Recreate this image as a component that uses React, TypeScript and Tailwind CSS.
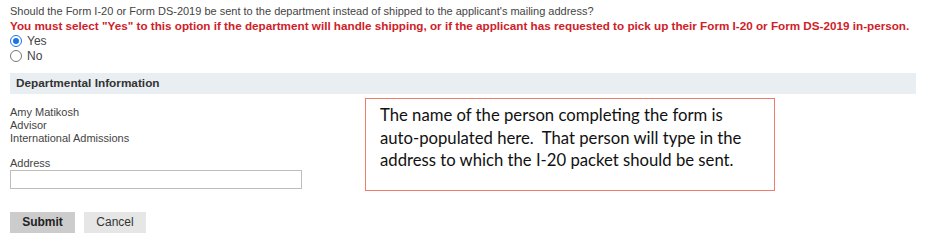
import React from "react";

export default function App() {
  return (
    <div className="relative w-[926px] h-[236px] bg-white overflow-hidden" style={{ fontFamily: '"Liberation Sans", Arial, sans-serif' }}>
      <div className="pl-[10px] pt-[5px]">
        <div className="text-[11px] leading-[13px] text-[#444] whitespace-nowrap">
          Should the Form I-20 or Form DS-2019 be sent to the department instead of shipped to the applicant's mailing address?
        </div>
        <div className="text-[11.7px] leading-[14px] font-bold text-[#cf2128] mt-[1px] whitespace-nowrap">
          You must select "Yes" to this option if the department will handle shipping, or if the applicant has requested to pick up their Form I-20 or Form DS-2019 in-person.
        </div>
        <div className="flex flex-col">
          <label className="flex items-center gap-[5px] h-[15px] text-[12px] text-[#444]">
            <span className="w-[12px] h-[12px] rounded-full border border-[#1a73e8] flex items-center justify-center bg-white">
              <span className="w-[6px] h-[6px] rounded-full bg-[#1a73e8]" />
            </span>
            Yes
          </label>
          <label className="flex items-center gap-[5px] h-[15px] text-[12px] text-[#444]">
            <span className="w-[12px] h-[12px] rounded-full border border-[#777] bg-white" />
            No
          </label>
        </div>
      </div>

      <div className="mx-[10px] mt-[10px] h-[21px] bg-[#e8eef2] flex items-center pl-[6px] text-[11.8px] font-bold text-[#333]">
        Departmental Information
      </div>

      <div className="pl-[10px] pt-[12px] text-[11px] leading-[13px] text-[#444]">
        <div>Amy Matikosh</div>
        <div>Advisor</div>
        <div>International Admissions</div>
        <div className="mt-[12px]">Address</div>
        <div className="w-[292px] h-[19px] border border-[#bdbdbd] bg-white" />
        <div className="flex gap-[9px] mt-[23px]">
          <button className="w-[65px] h-[21px] bg-[#cccccc] text-[12px] font-bold text-[#222]">Submit</button>
          <button className="w-[62px] h-[21px] bg-[#e6e6e6] text-[12px] text-[#333]">Cancel</button>
        </div>
      </div>

      <div className="absolute left-[365px] top-[98px] w-[410px] h-[93px] border border-[#ee7b6b] bg-white pl-[14px] pt-[5px] text-[16.7px] leading-[22.5px] text-[#111]" style={{ fontFamily: 'Lato, "Open Sans", sans-serif' }}>
        <div className="whitespace-nowrap">The name of the person completing the form is</div>
        <div className="whitespace-nowrap">auto-populated here.&nbsp; That person will type in the</div>
        <div className="whitespace-nowrap">address to which the I-20 packet should be sent.</div>
      </div>
    </div>
  );
}
